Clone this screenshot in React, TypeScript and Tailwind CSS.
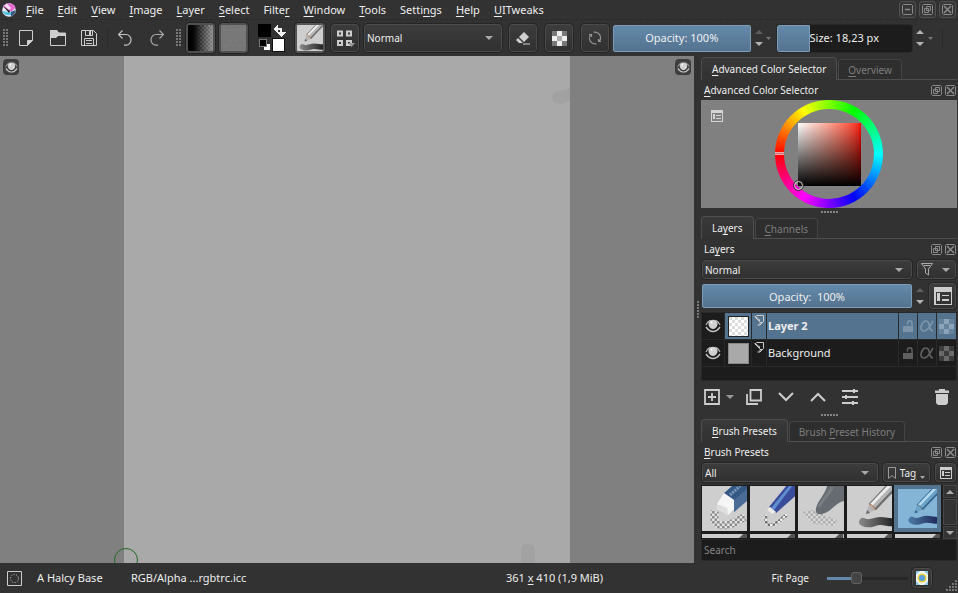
import type { ReactNode } from "react";

/* Text with an underlined keyboard mnemonic at index k */
function Mn({ t, k = 0 }: { t: string; k?: number }) {
  return (
    <span className="whitespace-pre">
      {t.slice(0, k)}
      <span className="underline underline-offset-2">{t[k]}</span>
      {t.slice(k + 1)}
    </span>
  );
}

const RAISED = "rounded-[3px] border border-[#4b4b4b] bg-linear-to-b from-[#3c3c3c] to-[#313131] outline outline-[#252525]";
const FILL = "border border-[#7c9bb6] bg-linear-to-b from-[#6389aa] to-[#54738f]";

function Grip() {
  return (
    <svg width="6" height="18" viewBox="0 0 6 18" fill="#777" shapeRendering="crispEdges" className="shrink-0">
      {[0, 3, 6, 9, 12, 15].map((y) => (
        <g key={y}>
          <rect x="0" y={y} width="2" height="2" />
          <rect x="3" y={y} width="2" height="2" />
        </g>
      ))}
    </svg>
  );
}

function Handle() {
  return (
    <div className="flex h-2 items-center justify-center gap-px">
      {[0, 1, 2, 3, 4, 5].map((i) => (
        <span key={i} className="size-[2px] bg-[#858585]" />
      ))}
    </div>
  );
}

function Down({ c = "text-[#a9a9a9]" }: { c?: string }) {
  return (
    <svg width="8" height="4" viewBox="0 0 8 4" fill="currentColor" className={`pointer-events-none shrink-0 ${c}`}>
      <path d="M0 0h8L4 4z" />
    </svg>
  );
}

function Spin({ upDim = false }: { upDim?: boolean }) {
  return (
    <div className="flex w-3 shrink-0 flex-col items-center gap-2">
      <button aria-label="Increase" className={upDim ? "text-[#5e5e5e]" : "text-[#b4b4b4]"}>
        <svg width="8" height="4" viewBox="0 0 8 4" fill="currentColor" className="block"><path d="M4 0L8 4H0z" /></svg>
      </button>
      <button aria-label="Decrease" className="text-[#b4b4b4]">
        <svg width="8" height="4" viewBox="0 0 8 4" fill="currentColor" className="block"><path d="M0 0h8L4 4z" /></svg>
      </button>
    </div>
  );
}

function FrameIcon({ kind }: { kind: "min" | "float" | "close" }) {
  return (
    <svg width="11" height="11" viewBox="0 0 11 11" fill="none" stroke="#8a8a8a" strokeWidth="1">
      <path d="M1.500.500h8l1 1v8l-1 1h-8l-1-1v-8z" />
      {kind === "min" && <path d="M3 5.500h5" strokeWidth="1.500" />}
      {kind === "float" && <path d="M4.500 2.500h4v4h-4zM2.500 4.500h4v4h-4z" />}
      {kind === "close" && <path d="M2 2l7 7M9 2l-7 7" strokeWidth="1.500" />}
    </svg>
  );
}

function Eye({ size = 16 }: { size?: number }) {
  return (
    <svg width={size} height={size} viewBox="0 0 16 16" fill="none">
      <path d="M3.500 4.500C4.500 2.500 6 1.800 8 1.800s3.500.700 4.500 2.700c.5 3.500-1.500 6.500-4.500 6.500S3 8 3.500 4.500z" fill="#d0d0d0" />
      <circle cx="6.500" cy="4.500" r="1" fill="#fff" />
      <path d="M1 7C2 4.500 3.500 3 5.500 2.300M15 7c-1-2.500-2.500-4-4.500-4.700" stroke="#b8b8b8" strokeWidth="1.200" />
      <path d="M1 9c2 3 4.500 4.500 7 4.500S13 12 15 9" stroke="#c4c4c4" strokeWidth="1.400" />
    </svg>
  );
}

function Checker({ a, b }: { a: string; b: string }) {
  return (
    <svg width="15" height="15" viewBox="0 0 15 15" shapeRendering="crispEdges">
      <rect width="15" height="15" fill={b} />
      <path fill={a} d="M5 0h5v5H5zM0 5h5v5H0zM10 5h5v5h-5zM5 10h5v5H5z" />
    </svg>
  );
}

function Krita() {
  return (
    <svg width="14" height="14" viewBox="0 0 14 14">
      <circle cx="7" cy="7" r="6.800" fill="#e9edf6" />
      <path d="M1 4A6.800 6.800 0 0 1 13.500 5L9 9z" fill="#e86bd0" />
      <path d="M2 2.500L5 .500 9 5 7 7z" fill="#f9d9f2" />
      <path d="M.3 8L6 9l7-1A6.800 6.800 0 0 1 .3 8z" fill="#59bfe0" />
      <path d="M9 9l4.500-2A6.800 6.800 0 0 1 9 13.500z" fill="#3a5a86" />
      <path d="M1 3l7 5-1 2z" fill="#222" />
    </svg>
  );
}

/* Document / view options glyph */
function ListIcon({ size = 12, c = "#cdcdcd" }: { size?: number; c?: string }) {
  return (
    <svg width={size} height={size} viewBox="0 0 12 12" fill={c} shapeRendering="crispEdges">
      <path fillRule="evenodd" d="M0 0h12v12H0zM1 3v8h10V3z" />
      <path d="M2 4h2v5H2zM5 5h5v1H5zM5 8h5v1H5z" />
    </svg>
  );
}

function ToolBtn({ label, children }: { label: string; children: ReactNode }) {
  return (
    <button aria-label={label} className={`flex h-7 w-7 shrink-0 items-center justify-center ${RAISED}`}>
      {children}
    </button>
  );
}

function Combo({ label, value, className }: { label: string; value: string; className: string }) {
  return (
    <label className={`flex items-center pr-2 ${RAISED} ${className}`}>
      <select aria-label={label} defaultValue={value} className="min-w-0 flex-1 appearance-none bg-transparent pl-[2px] outline-none">
        <option>{value}</option>
      </select>
      <Down />
    </label>
  );
}

function MenuBar() {
  const items: [string, number][] = [
    ["File", 0], ["Edit", 0], ["View", 0], ["Image", 0], ["Layer", 0], ["Select", 0],
    ["Filter", 5], ["Window", 0], ["Tools", 0], ["Settings", 5], ["Help", 0], ["UITweaks", 0],
  ];
  return (
    <header className="flex h-5 shrink-0 items-center border-b border-dashed border-[#292929] px-[2px] text-[11px]">
      <Krita />
      <nav className="ml-[10px] flex gap-[14px]">
        {items.map(([t, k]) => (
          <button key={t} className="leading-4"><Mn t={t} k={k} /></button>
        ))}
      </nav>
      <div className="ml-auto flex gap-[3px]">
        {(["min", "float", "close"] as const).map((k) => (
          <button key={k} aria-label={k} className="flex size-[17px] items-center justify-center rounded-[3px] border border-[#505050] bg-[#373737]">
            <FrameIcon kind={k} />
          </button>
        ))}
      </div>
    </header>
  );
}

function Pencil({ blue = false }: { blue?: boolean }) {
  const edge = blue ? "#36688f" : "#6c6c6c";
  const ink = blue ? "inkBlue" : "inkGray";
  return (
    <>
      <defs>
        <linearGradient id={ink} gradientUnits="userSpaceOnUse" x1="12" y1="0" x2="45" y2="0">
          <stop offset="0" stopColor={blue ? "#4d7ba5" : "#8a8a8a"} />
          <stop offset="1" stopColor={blue ? "#1f2a5c" : "#262626"} />
        </linearGradient>
      </defs>
      <path d="M16 36c7 4 10-1 17-1s8 2 15 1" fill="none" stroke={`url(#${ink})`} strokeWidth="8" strokeLinecap="round" />
      <path d="M19 28l3-10L39 0h8v4L28 24z" fill={blue ? "#6ba3c9" : "#b4b4b4"} />
      <path d="M23 18L40 0h4L25 20z" fill={blue ? "#b4dbf0" : "#ececec"} />
      <path d="M27 23L46 3v3L29 24z" fill={edge} />
      <path d="M22 18L39 0" stroke={edge} strokeWidth="1" />
      <path d="M22 18c2 0 5 3 6 6" stroke={blue ? "#5f6a72" : "#bd7650"} strokeWidth="1" fill="none" />
      <path d="M19 28l1-4 3 3z" fill={edge} />
    </>
  );
}

function ToolBar() {
  return (
    <div className="flex h-9 shrink-0 items-center pl-[3px] text-[11px]" role="toolbar">
      <Grip />
      <div className="ml-[9px] flex w-[79px] shrink-0 items-center justify-between">
        <button aria-label="New">
          <svg width="16" height="16" viewBox="0 0 16 16" fill="none" stroke="#cdcdcd"><path d="M1.500.500h13v10l-5 5h-8z" /><path d="M14.500 10.500h-5v5z" fill="#cdcdcd" /></svg>
        </button>
        <button aria-label="Open">
          <svg width="16" height="16" viewBox="0 0 16 16" fill="none" stroke="#cdcdcd"><path d="M.500 15.500V.500h6l2 2.500h7v12.500z" /><path d="M0 0h7l2 3h7v3H8L6 8H0z" fill="#cdcdcd" stroke="none" /></svg>
        </button>
        <button aria-label="Save">
          <svg width="16" height="16" viewBox="0 0 16 16" fill="none" stroke="#cdcdcd"><path d="M.500.500h12l3 3v12H.500zM3.500 15.500v-7h9v7M5 10.500h6M5 13.500h6M4.500.500v5h7v-5" /><path d="M8 1h2v4H8z" fill="#cdcdcd" stroke="none" /></svg>
        </button>
      </div>
      <span className="mx-[10px] h-5 w-px shrink-0 bg-[#2b2b2b]" />
      <div className="flex w-[46px] shrink-0 items-center justify-between">
        <button aria-label="Undo">
          <svg width="14" height="16" viewBox="0 0 14 16" fill="none" stroke="#c4c4c4" strokeWidth="1.200"><path d="M4.500.500l-4 4 4 4M1 4.500h7a5 5.300 0 0 1 0 10.700H6" /></svg>
        </button>
        <button aria-label="Redo">
          <svg width="14" height="16" viewBox="0 0 14 16" fill="none" stroke="#a8a8a8" strokeWidth="1.200"><path d="M9.500.500l4 4-4 4M13 4.500H6a5 5.300 0 0 0 0 10.700h2" /></svg>
        </button>
      </div>
      <div className="ml-[12px] flex shrink-0 items-center gap-[4px]">
        <Grip />
        <button aria-label="Gradient" className="h-[30px] w-[29px] overflow-hidden rounded-[3px] border-2 border-[#505050] bg-linear-to-r from-black to-[#888] outline outline-[#252525]">
          <svg width="25" height="26" className="block" shapeRendering="crispEdges">
            <defs>
              <pattern id="chk" width="4" height="4" patternUnits="userSpaceOnUse"><path d="M0 0h2v2H0zM2 2h2v2H2z" fill="#aaa" /></pattern>
              <linearGradient id="fade"><stop offset=".3" stopColor="#000" /><stop offset="1" stopColor="#777" /></linearGradient>
              <mask id="fm"><rect width="25" height="26" fill="url(#fade)" /></mask>
            </defs>
            <rect width="25" height="26" fill="url(#chk)" mask="url(#fm)" />
          </svg>
        </button>
        <button aria-label="Pattern" className="h-[30px] w-[29px] overflow-hidden rounded-[3px] border-2 border-[#505050] bg-[#787878] outline outline-[#252525]">
          <svg width="25" height="26" className="block" stroke="#727272" strokeDasharray="2 5"><path d="M0 3h25M3 8h22M1 13h25M4 18h23M0 23h25" /><path d="M2 5h25M1 15h24M4 20h21" stroke="#808080" /></svg>
        </button>
      </div>
      <svg width="28" height="28" viewBox="0 0 28 28" shapeRendering="crispEdges" className="ml-[10px] shrink-0">
        <rect width="13" height="13" fill="#000" />
        <rect x="6" y="20" width="6" height="6" fill="#fff" />
        <rect x="1.500" y="15.500" width="7" height="7" fill="#000" stroke="#777" />
        <rect x="14.500" y="14.500" width="12" height="13" fill="#fff" stroke="#111" />
        <path d="M15 5l5-5v4h4v4h4l-5 5-5-5h4V6h-2v4z" fill="#f0f0f0" />
      </svg>
      <button aria-label="Brush preset" className="mr-[6px] ml-[9px] h-[30px] w-[30px] shrink-0 overflow-hidden rounded-[3px] border-2 border-[#555] bg-[#cecece] outline outline-[#252525]">
        <svg width="26" height="26" viewBox="8 4 38 38" className="block"><Pencil /></svg>
      </button>
      <div className="flex shrink-0 items-center gap-[5px]">
        <ToolBtn label="Choose brush preset">
          <svg width="19" height="17" viewBox="0 0 19 17" fill="none" stroke="#cdcdcd" strokeWidth="2" className="shrink-0"><path d="M2 1.500h4v4H2zM11 1.500h4v4h-4zM2 11h4v4H2zM11 11h4v4h-4z" /><path d="M12 13h7l-3.500 4z" fill="#999" stroke="none" /></svg>
        </ToolBtn>
        <Combo label="Blending mode" value="Normal" className="h-7 w-[138px] text-[10px]" />
      </div>
      <div className="ml-[7px] flex shrink-0 items-center gap-[8px]">
        <ToolBtn label="Eraser mode">
          <svg width="14" height="13" viewBox="0 0 14 13"><path d="M8 0l5 5-5 5-5-5z" fill="#d0d0d0" /><path d="M2 6l5 5H3L0 8z" fill="#d0d0d0" /><path d="M7 12h7" stroke="#d0d0d0" /></svg>
        </ToolBtn>
        <ToolBtn label="Preserve alpha">
          <svg width="15" height="15" viewBox="0 0 15 15" shapeRendering="crispEdges"><rect width="15" height="15" fill="#777" /><path fill="#eee" d="M5 0h5v5H5zM0 5h5v5H0zM10 5h5v5h-5zM5 10h5v5H5z" /><path fill="#aaa" d="M5 5h5v5H5z" /></svg>
        </ToolBtn>
        <ToolBtn label="Reload preset">
          <svg width="14" height="14" viewBox="0 0 14 14" fill="none" stroke="#929292" strokeWidth="1.200"><path d="M4.500 12.200A5.700 5.700 0 0 1 3 3.200M9.500 1.800A5.700 5.700 0 0 1 11 10.800M5.500 1.200a5.700 5.700 0 0 1 4 .6M8.500 12.800a5.700 5.700 0 0 1-4-.6M1 3.500h2.500V6M13 10.500h-2.500V8" /></svg>
        </ToolBtn>
      </div>
      <div className={`ml-1 flex h-[27px] min-w-0 flex-1 items-center justify-center rounded-[2px] pt-px ${FILL}`}>Opacity: 100%</div>
      <div className="ml-[2px] flex w-[24px] shrink-0 items-center justify-between">
        <Spin upDim />
        <svg width="5" height="3" viewBox="0 0 5 3" fill="#777" className="mr-[6px]"><path d="M0 0h5L2.500 3z" /></svg>
      </div>
      <div className="grid h-[27px] min-w-0 flex-1 items-center rounded-[2px] bg-[#1c1c1c] outline outline-[#292929]">
        <div className={`col-start-1 row-start-1 h-full w-1/4 rounded-l-[2px] ${FILL}`} />
        <span className="col-start-1 row-start-1 pt-px text-center">Size: 18,23 px</span>
      </div>
      <div className="ml-[2px] flex w-[44px] shrink-0 items-center">
        <Spin />
        <svg width="5" height="3" viewBox="0 0 5 3" fill="#777" className="ml-[2px]"><path d="M0 0h5L2.500 3z" /></svg>
        <span className="ml-[9px] h-5 w-px bg-[#2b2b2b]" />
      </div>
    </div>
  );
}

function Tabs({ active, other, ka = 0, kb = 0 }: { active: string; other: string; ka?: number; kb?: number }) {
  return (
    <div role="tablist" className="flex h-[23px] items-stretch">
      <button role="tab" aria-selected="true" className="rounded-t-[4px] border border-b-0 border-[#4e4e4e] bg-linear-to-b from-[#393939] to-[#323232] px-[10px]">
        <Mn t={active} k={ka} />
      </button>
      <div className="flex flex-1 items-end border-b border-[#4e4e4e] pl-px">
        <button role="tab" aria-selected="false" className="h-5 rounded-t-[4px] border border-b-0 border-[#444] bg-[#2e2e2e] px-[9px] text-[#7d7d7d]">
          <Mn t={other} k={kb} />
        </button>
      </div>
    </div>
  );
}

function Title({ t, k = 0 }: { t: string; k?: number }) {
  return (
    <div className="flex h-5 items-center pr-px pl-[3px]">
      <h2><Mn t={t} k={k} /></h2>
      <div className="ml-auto flex gap-[3px]">
        <button aria-label="Float docker"><FrameIcon kind="float" /></button>
        <button aria-label="Close docker"><FrameIcon kind="close" /></button>
      </div>
    </div>
  );
}

function ColorSelector() {
  return (
    <div className="grid h-[108px] grid-cols-[1fr_108px_1fr] bg-[#808080]">
      <button aria-label="Selector settings" className="mt-[10px] ml-[10px] self-start justify-self-start"><ListIcon c="#d4d4d4" /></button>
      <div className="grid place-items-center rounded-full bg-[conic-gradient(from_270deg,#f00,#ff0,#0f0,#0ff,#00f,#f0f,#f00)]">
        <div className="relative grid size-[90px] place-items-center rounded-full bg-[#808080]">
          <div className="relative size-[63px] bg-linear-to-r from-white to-[#f00]">
            <div className="size-full bg-linear-to-b from-transparent to-black" />
            <span className="absolute -bottom-1 -left-1 size-[9px] rounded-full border border-[#ddd] outline outline-[#333]" />
          </div>
          <span className="absolute top-[43px] -left-[9px] h-[3px] w-[9px] border-y border-[#eaa] bg-[#c77]" />
        </div>
      </div>
    </div>
  );
}

function LayerRow({ name, active = false }: { name: string; active?: boolean }) {
  const bg = active ? "bg-[#54738f]" : "bg-[#1c1c1c]";
  const ic = active ? "#7c95ab" : "#5f5f5f";
  return (
    <li className="flex h-[26px] gap-px text-[11px]">
      <button aria-label={`Toggle ${name}`} className="flex w-[22px] items-center justify-center bg-[#1c1c1c]"><Eye /></button>
      <div className={`flex w-[26px] items-center justify-center ${bg}`}>
        {active ? (
          <svg width="21" height="21" shapeRendering="crispEdges" className="border border-[#222]">
            <defs><pattern id="lc" width="6" height="6" patternUnits="userSpaceOnUse"><rect width="6" height="6" fill="#fff" /><path d="M0 0h3v3H0zM3 3h3v3H3z" fill="#ddd" /></pattern></defs>
            <rect width="21" height="21" fill="url(#lc)" />
          </svg>
        ) : (
          <span className="size-[21px] border border-[#888] bg-[#a9a9a9]" />
        )}
      </div>
      <div className={`flex w-[14px] justify-center pt-[2px] ${bg}`}>
        <svg width="11" height="11" viewBox="0 0 11 11" fill="none" stroke="#cdcdcd"><path d="M2.500.500h7v6L6 10H3.500M6 10V7.500h3M.500 1.500l5 5V4.500M1 1l5 4.500" /></svg>
      </div>
      <div className={`flex flex-1 items-center pl-px ${active ? "font-bold" : ""} ${bg}`}>{name}</div>
      <button aria-label="Lock" className={`flex w-[18px] items-center justify-center ${bg}`}>
        <svg width="12" height="12" viewBox="0 0 12 12"><path d="M1 6h10v6H1z" fill={ic} /><path d="M5.500 4.500V3a2.200 2.200 0 0 1 4.500 0v3" fill="none" stroke={ic} strokeWidth="1.500" /></svg>
      </button>
      <button aria-label="Alpha inheritance" className={`flex w-[18px] items-center justify-center ${bg}`}>
        <svg width="14" height="12" viewBox="0 0 14 12" fill="none" stroke={ic} strokeWidth="1.700"><path d="M13 1C10 6 8 11 4 11 1 11 0 8 2 4c2-4 6-4 7 0 1 4 1 7 4 7" /></svg>
      </button>
      <button aria-label="Alpha lock" className={`flex w-[19px] items-center justify-center pr-px ${bg}`}>
        <Checker a={active ? "#8ba4ba" : "#6a6a6a"} b={active ? "#67829b" : "#3c3c3c"} />
      </button>
    </li>
  );
}

function LayersDocker() {
  return (
    <section>
      <Tabs active="Layers" ka={2} other="Channels" />
      <Title t="Layers" k={2} />
      <div className="mt-px flex gap-[5px] px-px">
        <Combo label="Layer blending mode" value="Normal" className="h-[19px] flex-1" />
        <button aria-label="Filter layers" className={`flex h-[19px] w-[39px] items-center justify-between pr-[5px] pl-[3px] ${RAISED}`}>
          <svg width="12" height="13" viewBox="0 0 12 13" fill="none" stroke="#aaa"><path d="M.500.500h11L7.500 6v6l-3-2V6zM3 2.500h6" /></svg>
          <Down />
        </button>
      </div>
      <div className="mt-[4px] flex items-center gap-[2px] px-px">
        <div className={`flex h-[24px] flex-1 items-center justify-center rounded-[2px] pt-px text-[11px] whitespace-pre ${FILL}`}>Opacity:  100%</div>
        <Spin upDim />
        <button aria-label="Layer view options" className={`ml-px flex h-[26px] w-[27px] items-center justify-center ${RAISED}`}><ListIcon size={18} /></button>
      </div>
      <ul className="mt-[3px] flex h-[69px] flex-col gap-px border border-[#292929] bg-[#292929]">
        <LayerRow name="Layer 2" active />
        <LayerRow name="Background" />
        <li className="flex-1 bg-[#1c1c1c]" />
      </ul>
      <div className="flex h-[31px] items-center gap-4 pr-[8px] pl-[3px]">
        <button aria-label="Add layer" className="flex items-center gap-[5px]">
          <svg width="17" height="16" viewBox="0 0 17 16" fill="none" stroke="#cdcdcd" strokeWidth="1.800"><path d="M1 1h14v14H1zM8 4v8M4 8h8" /></svg>
          <Down c="text-[#999]" />
        </button>
        <button aria-label="Duplicate" className="-ml-1">
          <svg width="16" height="16" viewBox="0 0 16 16" fill="none" stroke="#cdcdcd" strokeWidth="1.800"><path d="M4.500 1H15v10.500H4.500zM1 5v10h11" /></svg>
        </button>
        <button aria-label="Move down">
          <svg width="16" height="10" viewBox="0 0 16 10" fill="none" stroke="#cdcdcd" strokeWidth="2"><path d="M1 1l7 7 7-7" /></svg>
        </button>
        <button aria-label="Move up">
          <svg width="16" height="10" viewBox="0 0 16 10" fill="none" stroke="#cdcdcd" strokeWidth="2"><path d="M1 9l7-7 7 7" /></svg>
        </button>
        <button aria-label="Properties">
          <svg width="16" height="16" viewBox="0 0 16 16" fill="none" stroke="#cdcdcd" strokeWidth="2"><path d="M0 2h16M0 8h16M0 14h16M12 0v4M4 6v4M11 12v4" /></svg>
        </button>
        <button aria-label="Delete" className="ml-auto">
          <svg width="14" height="16" viewBox="0 0 14 16" fill="#cdcdcd"><path d="M4 0h6v1.500h4V4H0V1.500h4zM1 5h12v9l-2 2H3l-2-2z" /></svg>
        </button>
      </div>
    </section>
  );
}

function Cell({ kind }: { kind: "eraser" | "soft" | "smudge" | "pencil" | "active" | "peek" }) {
  if (kind === "active")
    return (
      <button aria-label={kind} className="bg-[#54738f] p-[4px]">
        <svg viewBox="0 0 45 45" className="block h-[39px] w-full bg-[#84b5d7]" preserveAspectRatio="none"><Pencil blue /></svg>
      </button>
    );
  const small = kind === "peek";
  return (
    <button aria-label={kind} className="m-px overflow-hidden bg-[#cecece]">
      <svg viewBox={small ? "0 0 45 4" : "0 0 45 45"} preserveAspectRatio={small ? "xMaxYMin slice" : "none"} className={small ? "block h-[4px] w-full" : "block h-[45px] w-full"}>
        <defs><pattern id="bc" width="5" height="5" patternUnits="userSpaceOnUse"><rect width="5" height="5" fill="#eee" /><path d="M0 0h2.500v2.500H0zM2.500 2.500H5V5H2.500z" fill="#707070" /></pattern></defs>
        {kind === "eraser" && (
          <>
            <path d="M13 25c-3 12 3 16 12 14s10-5 18-8" fill="none" stroke="url(#bc)" strokeWidth="8" opacity=".7" />
            <path d="M15 18L22 7l11 5v10l-7 7-11-6z" fill="#f5f5f5" />
            <path d="M15 18l10 4 1 7-11-6z" fill="#ddd" />
            <path d="M22 7l8-7h16v12L32 26V14z" fill="#355985" />
            <path d="M32 14L46 2v12L32 26z" fill="#4c6c98" />
            <path d="M28 9l10-9" stroke="#7d97b8" strokeWidth="3" strokeDasharray="2 1" />
          </>
        )}
        {kind === "soft" && (
          <>
            <path d="M16 29c-1 9 1 11 8 9s6-6 13-9" fill="none" stroke="url(#bc)" strokeWidth="3" />
            <path d="M19 21L36 0h9v10L26 27z" fill="#3a4b9c" />
            <path d="M21 22L39 0h3L24 24z" fill="#5f8fd0" />
            <path d="M17 24l3-3 6 5-4 2z" fill="#eceae2" />
          </>
        )}
        {kind === "smudge" && (
          <>
            <path d="M4 26l9-2 26 10-3 6-22-2z" fill="url(#bc)" opacity=".35" />
            <path d="M18 22C20 14 26 10 29 0h17v15c-8 1-13 11-22 13-5 1-7-1-6-6z" fill="#666c72" />
            <path d="M21 21C24 13 31 9 34 1" stroke="#868b90" strokeWidth="3" fill="none" opacity=".6" />
          </>
        )}
        {kind === "pencil" && <Pencil />}
        {small && <path d="M36 5l5-5h4v5z" fill="#555" />}
      </svg>
    </button>
  );
}

function BrushDocker() {
  return (
    <section>
      <Tabs active="Brush Presets" other="Brush Preset History" kb={6} />
      <Title t="Brush Presets" />
      <div className="mt-px flex gap-[5px] px-px">
        <Combo label="Tag filter" value="All" className="h-[19px] flex-1" />
        <button className={`flex h-[19px] w-[47px] items-center justify-between px-[4px] ${RAISED}`}>
          <svg width="8" height="12" viewBox="0 0 8 12" fill="none" stroke="#999"><path d="M.500.500h7v11L4 8.500.500 11.500z" /></svg>
          <Mn t="Tag" k={2} />
          <svg width="5" height="3" viewBox="0 0 5 3" fill="#aaa" className="mb-[2px] self-end"><path d="M0 0h5L2.500 3z" /></svg>
        </button>
        <button aria-label="Preset view options" className={`flex h-[19px] w-[21px] items-center justify-center ${RAISED}`}><ListIcon size={12} /></button>
      </div>
      <div className="mt-[3px] flex h-[54px] overflow-hidden bg-[#1c1c1c]">
        <div className="grid flex-1 grid-cols-5 grid-rows-[47px_6px] gap-px">
          {(["eraser", "soft", "smudge", "pencil", "active", "peek", "peek", "peek", "peek", "peek"] as const).map((k, i) => (
            <Cell key={i} kind={k} />
          ))}
        </div>
        <div className="ml-[2px] flex w-[14px] flex-col bg-[#252525]">
          <button aria-label="Scroll up" className="flex h-[13px] items-center justify-center border border-[#444] bg-[#333] text-[#aaa]"><svg width="8" height="4" viewBox="0 0 8 4" fill="currentColor"><path d="M4 0l4 4H0z" /></svg></button>
          <span className="my-px flex-1 border border-[#484848] bg-[#333]" />
          <button aria-label="Scroll down" className="flex h-[13px] items-center justify-center border border-[#444] bg-[#333]"><Down /></button>
        </div>
      </div>
      <input aria-label="Search" placeholder="Search" className="block h-[22px] w-full rounded-[2px] border border-[#292929] bg-[#1c1c1c] px-[2px] placeholder:text-[#858585]" />
    </section>
  );
}

function CanvasEye() {
  return (
    <button aria-label="Toggle canvas item" className="mt-[3px] flex size-4 items-center justify-center rounded-[4px] bg-[#3e3e3e]">
      <Eye size={13} />
    </button>
  );
}

export default function App() {
  return (
    <div className="flex h-screen flex-col overflow-hidden bg-[#323232] font-['Noto_Sans','Open_Sans',sans-serif] text-[#eee]">
      <MenuBar />
      <ToolBar />
      <div className="flex min-h-0 flex-1">
        <main className="relative flex min-w-0 flex-1 justify-between overflow-hidden bg-[#808080] px-[3px]">
          <CanvasEye />
          <svg viewBox="0 0 446 507" preserveAspectRatio="none" className="h-full w-[446px] bg-[#a9a9a9]">
            <path d="M446 32l-14 4q-6 4-2 10 5 4 16-1z" fill="#a1a1a1" />
            <path d="M397 507v-13q1-6 7-6t7 6v13z" fill="#a2a2a2" />
          </svg>
          <CanvasEye />
          <span className="absolute -bottom-[9px] left-[114px] size-6 rounded-full border border-[#1f6a24]" />
        </main>
        <aside className="flex w-[264px] shrink-0 text-[10px] leading-4">
          <div className="flex w-[7px] flex-col items-center justify-center gap-px">
            {[0, 1, 2, 3, 4, 5].map((i) => <span key={i} className="size-[2px] bg-[#777]" />)}
          </div>
          <div className="mr-px min-w-0 flex-1 pt-px">
            <Tabs active="Advanced Color Selector" other="Overview" />
            <Title t="Advanced Color Selector" />
            <ColorSelector />
            <Handle />
            <LayersDocker />
            <div className="-mt-px"><Handle /></div>
            <BrushDocker />
          </div>
        </aside>
      </div>
      <footer className="grid h-[30px] shrink-0 grid-cols-[1fr_auto_1fr] items-center pl-[7px] text-[11px]">
        <div className="flex items-center">
          <svg width="15" height="15" viewBox="0 0 15 15" fill="none" stroke="#cdcdcd"><path d="M.500.500h14v14H.500z" /><circle cx="7.500" cy="7.500" r="4" strokeDasharray="1 1.500" /></svg>
          <span className="ml-[15px] w-[94px]">A Halcy Base</span>
          <span>RGB/Alpha ...rgbtrc.icc</span>
        </div>
        <button className="-mr-36"><Mn t="361 x 410 (1,9 MiB)" k={4} /></button>
        <div className="flex items-center justify-end self-stretch">
          <label htmlFor="zoom" className="mr-[18px] text-[10px]">Fit Page</label>
          <input
            id="zoom" type="range" min="0" max="100" defaultValue="34"
            className="h-3 w-[81px] appearance-none bg-[linear-gradient(to_right,#6389aa_34%,#272727_34%)] bg-[length:100%_3px] bg-center bg-no-repeat [&::-webkit-slider-thumb]:h-3 [&::-webkit-slider-thumb]:w-[11px] [&::-webkit-slider-thumb]:appearance-none [&::-webkit-slider-thumb]:rounded-[3px] [&::-webkit-slider-thumb]:border [&::-webkit-slider-thumb]:border-[#626262] [&::-webkit-slider-thumb]:bg-[#444]"
          />
          <button aria-label="Map pixels" className={`mr-[14px] ml-1 flex h-5 w-5 items-center justify-center ${RAISED}`}>
            <svg width="12" height="14" viewBox="0 0 12 14"><rect width="12" height="14" fill="#f3f7f4" /><path d="M0 0h4L0 4zM12 0v4L8 0zM0 14v-4l4 4zM12 14H8l4-4z" fill="#8cc9e8" /><circle cx="6" cy="7" r="4.500" fill="#f0cf33" /><circle cx="6" cy="7" r="3" fill="#5a9fe0" /></svg>
          </button>
          <svg width="12" height="12" viewBox="0 0 12 12" fill="#777" className="mb-px self-end"><path d="M9 0h2v2H9zM6 3h2v2H6zM9 3h2v2H9zM3 6h2v2H3zM6 6h2v2H6zM9 6h2v2H9zM0 9h2v2H0zM3 9h2v2H3zM6 9h2v2H6zM9 9h2v2H9z" /></svg>
        </div>
      </footer>
    </div>
  );
}
